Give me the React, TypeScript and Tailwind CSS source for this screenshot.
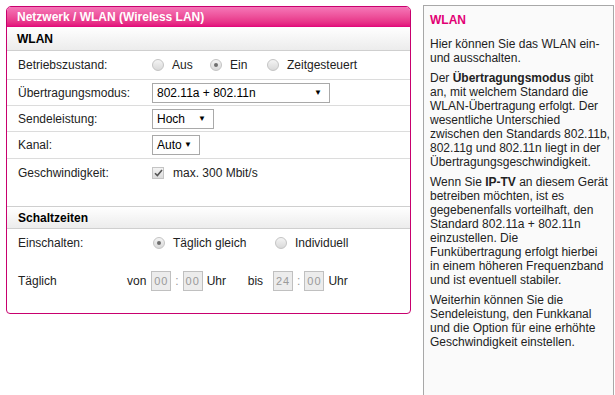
import React from "react";

const Radio = ({ checked = false }: { checked?: boolean }) => (
  <span className="inline-flex h-[12px] w-[12px] shrink-0 items-center justify-center rounded-full border border-[#c4c4c4] bg-gradient-to-b from-[#f4f4f4] to-[#d9d9d9]">
    {checked && <span className="h-[4px] w-[4px] rounded-full bg-[#6e6e6e]" />}
  </span>
);

const Select = ({ value, width }: { value: string; width: string }) => (
  <div className={`flex h-[20px] items-center justify-between border border-[#a9a9a9] bg-white pl-[4px] pr-[7px] text-[12px] text-black ${width}`}>
    <span>{value}</span>
    <span className="text-[8px] leading-none">▼</span>
  </div>
);

const TimeBox = ({ value }: { value: string }) => (
  <span className="inline-flex h-[20px] w-[20px] items-center justify-center border border-[#c0c0c0] bg-[#ececec] text-[11px] tracking-[1px] text-[#9a9a9a]">
    {value}
  </span>
);

const Row = ({ label, children, last = false, h = "h-[26px]" }: { label: string; children: React.ReactNode; last?: boolean; h?: string }) => (
  <div className={`flex items-center ${h} ${last ? "" : "border-b border-[#dcdcdc]"}`}>
    <div className="w-[145px] pl-[11px]">{label}</div>
    <div className="flex items-center">{children}</div>
  </div>
);

const Lines = ({ children, className = "" }: { children: React.ReactNode; className?: string }) => (
  <p className={`whitespace-nowrap ${className}`}>{children}</p>
);

export default function App() {
  return (
    <div
      className="flex h-[395px] w-[615px] items-start bg-white text-[12px] text-[#222]"
      style={{ fontFamily: '"Liberation Sans", Arial, sans-serif' }}
    >
      {/* Main panel */}
      <div className="ml-[6px] mt-[6px] w-[405px] overflow-hidden rounded-t-[5px] rounded-b-[4px] border border-[#c8006e]">
        <div className="flex h-[20px] items-center bg-gradient-to-b from-[#f576b8] to-[#e2007a] pl-[10px] text-[12px] font-bold text-white">
          Netzwerk / WLAN (Wireless LAN)
        </div>
        <div className="flex h-[24px] items-center border-b border-[#cfcfcf] bg-gradient-to-b from-white to-[#ececec] pl-[10px] text-[12px] font-bold text-black">
          WLAN
        </div>

        <Row label="Betriebszustand:" h="h-[29px]">
          <Radio />
          <span className="ml-[8px] w-[38px]">Aus</span>
          <Radio checked />
          <span className="ml-[8px] w-[37px]">Ein</span>
          <Radio />
          <span className="ml-[8px]">Zeitgesteuert</span>
        </Row>
        <Row label="Übertragungsmodus:">
          <Select value="802.11a + 802.11n" width="w-[178px]" />
        </Row>
        <Row label="Sendeleistung:">
          <Select value="Hoch" width="w-[62px]" />
        </Row>
        <Row label="Kanal:" h="h-[27px]">
          <Select value="Auto" width="w-[48px]" />
        </Row>
        <Row label="Geschwindigkeit:" last h="h-[27px]">
          <span className="inline-flex h-[12px] w-[12px] items-center justify-center border border-[#c4c4c4] bg-gradient-to-b from-[#f4f4f4] to-[#dcdcdc]">
            <svg width="9" height="8" viewBox="0 0 9 8">
              <path d="M1 4.2 L3.4 6.6 L8 1" fill="none" stroke="#555" strokeWidth="1.6" />
            </svg>
          </span>
          <span className="ml-[9px]">max. 300 Mbit/s</span>
        </Row>

        <div className="mt-[20px] flex h-[23px] items-center border-y border-[#cfcfcf] bg-gradient-to-b from-white to-[#ececec] pl-[11px] font-bold text-black">
          Schaltzeiten
        </div>

        <div className="flex h-[27px] items-center">
          <div className="w-[146px] pl-[11px]">Einschalten:</div>
          <Radio checked />
          <span className="ml-[8px] w-[102px]">Täglich gleich</span>
          <Radio />
          <span className="ml-[8px]">Individuell</span>
        </div>

        <div className="mt-[13px] flex h-[24px] items-center">
          <div className="w-[120px] pl-[11px]">Täglich</div>
          <span className="mr-[5px]">von</span>
          <TimeBox value="00" />
          <span className="mx-[4px] text-[#999]">:</span>
          <TimeBox value="00" />
          <span className="ml-[4px] w-[41px]">Uhr</span>
          <span className="mr-[10px]">bis</span>
          <TimeBox value="24" />
          <span className="mx-[4px] text-[#999]">:</span>
          <TimeBox value="00" />
          <span className="ml-[4px]">Uhr</span>
        </div>
        <div className="h-[20px]" />
      </div>

      {/* Help panel */}
      <div className="ml-[12px] mt-[5px] h-[390px] w-[191px] border-x border-t border-[#a8a8a8] bg-[#fafafa] pl-[6px] pt-[7px] text-[12px] leading-[14px] text-[#222]">
        <div className="mb-[9px] font-bold leading-[15px] text-[#e20074]">WLAN</div>
        <Lines className="mb-[6px]">
          Hier können Sie das WLAN ein-<br />
          und ausschalten.
        </Lines>
        <Lines className="mb-[6px]">
          Der <b>Übertragungsmodus</b> gibt<br />
          an, mit welchem Standard die<br />
          WLAN-Übertragung erfolgt. Der<br />
          wesentliche Unterschied<br />
          zwischen den Standards 802.11b,<br />
          802.11g und 802.11n liegt in der<br />
          Übertragungsgeschwindigkeit.
        </Lines>
        <Lines className="mb-[6px]">
          Wenn Sie <b>IP-TV</b> an diesem Gerät<br />
          betreiben möchten, ist es<br />
          gegebenenfalls vorteilhaft, den<br />
          Standard 802.11a + 802.11n<br />
          einzustellen. Die<br />
          Funkübertragung erfolgt hierbei<br />
          in einem höheren Frequenzband<br />
          und ist eventuell stabiler.
        </Lines>
        <Lines>
          Weiterhin können Sie die<br />
          Sendeleistung, den Funkkanal<br />
          und die Option für eine erhöhte<br />
          Geschwindigkeit einstellen.
        </Lines>
      </div>
    </div>
  );
}
